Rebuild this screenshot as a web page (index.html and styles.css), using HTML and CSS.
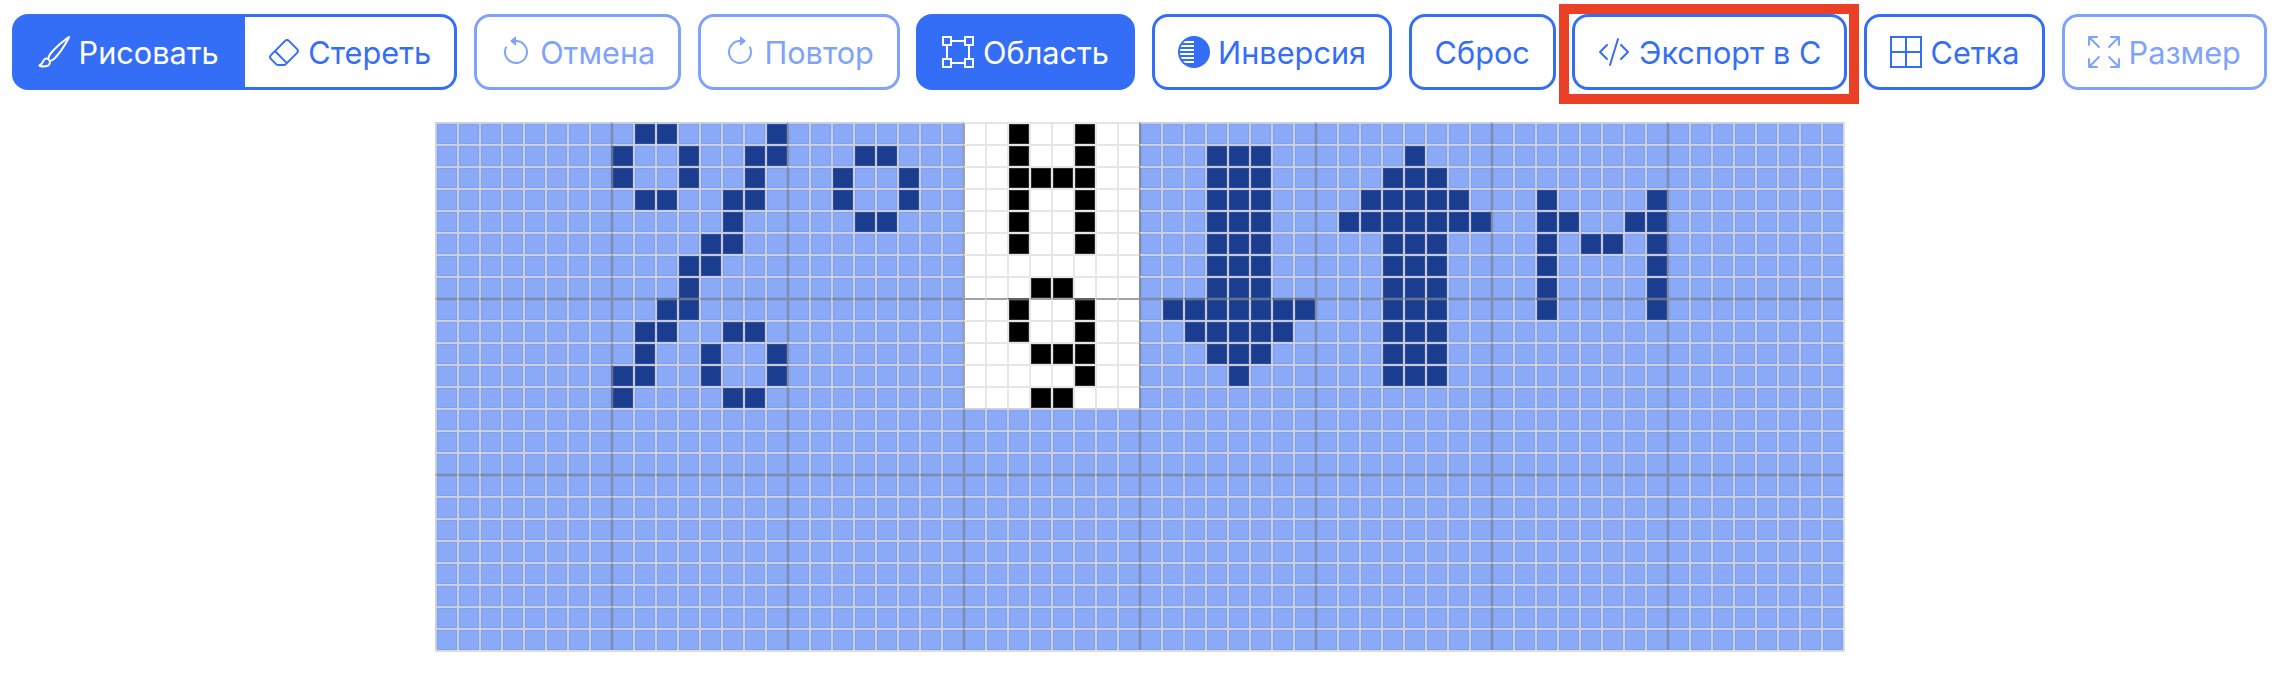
FILE: index.html
```html
<!DOCTYPE html>
<html lang="en">
<head>
    <meta charset="UTF-8">
    <meta name="viewport" content="width=device-width, initial-scale=1.0">
    <title>Редактор пикселей</title>
    <link rel="stylesheet" href="styles.css">
</head>
<body>

<div class="toolbar">
    <div class="btn-group">
        <button class="btn btn-active">
            <svg class="icon" viewBox="0 0 16 16"><path d="M15.825.12a.5.5 0 0 1 .132.584c-1.53 3.43-4.743 8.17-7.095 10.64a6.1 6.1 0 0 1-2.373 1.534c-.018.227-.06.538-.16.868-.201.659-.667 1.479-1.708 1.74a8.1 8.1 0 0 1-3.078.132 4 4 0 0 1-.562-.135 1.4 1.4 0 0 1-.466-.247.7.7 0 0 1-.204-.288.62.62 0 0 1 .004-.443c.095-.245.316-.38.461-.452.394-.197.625-.453.867-.826.095-.144.184-.297.287-.472l.117-.198c.151-.255.326-.54.546-.848.528-.739 1.201-.925 1.746-.896q.19.012.348.048c.062-.172.142-.38.238-.608.261-.619.658-1.419 1.187-2.069 2.176-2.67 6.18-6.206 9.117-8.104a.5.5 0 0 1 .596.04M4.705 11.912a1.2 1.2 0 0 0-.419-.1c-.246-.013-.573.05-.879.479-.197.275-.355.532-.5.777l-.105.177c-.106.181-.213.362-.32.528a3.4 3.4 0 0 1-.76.861c.69.112 1.736.111 2.657-.12.559-.139.843-.569.993-1.06a3 3 0 0 0 .126-.75zm1.44.026c.12-.04.277-.1.458-.183a5.1 5.1 0 0 0 1.535-1.1c1.9-1.996 4.412-5.57 6.052-8.631-2.59 1.927-5.566 4.66-7.302 6.792-.442.543-.795 1.243-1.042 1.826-.121.288-.214.54-.275.72v.001l.575.575z"/></svg>
            Рисовать
        </button>
        <button class="btn">
            <svg class="icon" viewBox="0 0 16 16"><path d="M8.086 2.207a2 2 0 0 1 2.828 0l3.879 3.879a2 2 0 0 1 0 2.828l-5.5 5.5A2 2 0 0 1 7.879 15H5.12a2 2 0 0 1-1.414-.586l-2.5-2.5a2 2 0 0 1 0-2.828zm2.121.707a1 1 0 0 0-1.414 0L4.16 7.547l5.293 5.293 4.633-4.633a1 1 0 0 0 0-1.414zM8.746 13.547 3.453 8.254 1.914 9.793a1 1 0 0 0 0 1.414l2.5 2.5a1 1 0 0 0 .707.293H7.88a1 1 0 0 0 .707-.293z"/></svg>
            Стереть
        </button>
    </div>

    <button class="btn btn-disabled">
        <svg class="icon" viewBox="0 0 16 16"><path d="M8 3a5 5 0 1 1-4.546 2.914.5.5 0 0 0-.908-.417A6 6 0 1 0 8 2z"/><path d="M8 4.466V.534a.25.25 0 0 0-.41-.192L5.23 2.308a.25.25 0 0 0 0 .384l2.36 1.966A.25.25 0 0 0 8 4.466"/></svg>
        Отмена
    </button>
    <button class="btn btn-disabled">
        <svg class="icon" viewBox="0 0 16 16"><path d="M8 3a5 5 0 1 0 4.546 2.914.5.5 0 0 1 .908-.417A6 6 0 1 1 8 2z"/><path d="M8 4.466V.534a.25.25 0 0 1 .41-.192l2.36 1.966c.12.1.12.284 0 .384L8.41 4.658A.25.25 0 0 1 8 4.466"/></svg>
        Повтор
    </button>
    <button class="btn btn-active">
        <svg class="icon" viewBox="0 0 16 16"><path d="M5 2V0H0v5h2v6H0v5h5v-2h6v2h5v-5h-2V5h2V0h-5v2zm6 1v2h2v6h-2v2H5v-2H3V5h2V3zm1-2h3v3h-3zm3 11v3h-3v-3zM4 15H1v-3h3zM1 4V1h3v3z"/></svg>
        Область
    </button>
    <button class="btn">
        <svg class="icon" viewBox="0 0 32 32">
            <clipPath id="stripeClip"><circle cx="16" cy="16" r="14"/></clipPath>
            <circle cx="16" cy="16" r="16"/>
            <g class="stripes" clip-path="url(#stripeClip)">
                <rect x="0" y="5" width="16" height="2"/>
                <rect x="0" y="9" width="16" height="2"/>
                <rect x="0" y="13" width="16" height="2"/>
                <rect x="0" y="17" width="16" height="2"/>
                <rect x="0" y="21" width="16" height="2"/>
                <rect x="0" y="25" width="16" height="2"/>
            </g>
        </svg>
        Инверсия
    </button>
    <button class="btn">Сброс</button>
    <button class="btn btn-marked">
        <svg class="icon" viewBox="0 0 16 16"><path d="M10.478 1.647a.5.5 0 1 0-.956-.294l-4 13a.5.5 0 0 0 .956.294zM4.854 4.146a.5.5 0 0 1 0 .708L1.707 8l3.147 3.146a.5.5 0 0 1-.708.708l-3.5-3.5a.5.5 0 0 1 0-.708l3.5-3.5a.5.5 0 0 1 .708 0m6.292 0a.5.5 0 0 0 0 .708L14.293 8l-3.147 3.146a.5.5 0 0 0 .708.708l3.5-3.5a.5.5 0 0 0 0-.708l-3.5-3.5a.5.5 0 0 0-.708 0"/></svg>
        Экспорт в С
    </button>
    <button class="btn">
        <svg class="icon" viewBox="0 0 16 16"><path d="M0 0h16v16H0zm1 1v6.5h6.5V1zm7.5 0v6.5H15V1zM15 8.5H8.5V15H15zM7.5 15V8.5H1V15z"/></svg>
        Сетка
    </button>
    <button class="btn btn-disabled">
        <svg class="icon" viewBox="0 0 16 16"><path d="M5.828 10.172a.5.5 0 0 0-.707 0l-4.096 4.096V11.5a.5.5 0 0 0-1 0v3.975a.5.5 0 0 0 .5.5H4.5a.5.5 0 0 0 0-1H1.732l4.096-4.096a.5.5 0 0 0 0-.707m4.344 0a.5.5 0 0 1 .707 0l4.096 4.096V11.5a.5.5 0 1 1 1 0v3.975a.5.5 0 0 1-.5.5H11.5a.5.5 0 0 1 0-1h2.768l-4.096-4.096a.5.5 0 0 1 0-.707m0-4.344a.5.5 0 0 0 .707 0l4.096-4.096V4.5a.5.5 0 1 0 1 0V.525a.5.5 0 0 0-.5-.5H11.5a.5.5 0 0 0 0 1h2.768l-4.096 4.096a.5.5 0 0 0 0 .707m-4.344 0a.5.5 0 0 1-.707 0L1.025 1.732V4.5a.5.5 0 0 1-1 0V.525a.5.5 0 0 1 .5-.5H4.5a.5.5 0 0 1 0 1H1.732l4.096 4.096a.5.5 0 0 1 0 .707"/></svg>
        Размер
    </button>
</div>

<div class="board-wrap">
    <div class="board" id="board"></div>
</div>

<script src="script.js"></script>
</body>
</html>
```

FILE: styles.css
```css
body {
    margin: 0;
    background-color: #fff;
    font-family: Inter, "Liberation Sans", sans-serif;
}

.toolbar {
    display: flex;
    gap: 16.5px;
    padding: 14px 12px 32px;
}

.btn-group {
    display: flex;
}

.btn {
    display: flex;
    align-items: center;
    gap: 8.6px;
    height: 76px;
    padding: 0 23px;
    box-sizing: border-box;
    background-color: #fff;
    color: #356ef6;
    border: 3px solid #356ef6;
    border-radius: 16px;
    font-family: inherit;
    font-size: 30.7px;
    font-weight: 420;
    white-space: nowrap;
}

.btn-group .btn:first-child {
    border-top-right-radius: 0;
    border-bottom-right-radius: 0;
}

.btn-group .btn:last-child {
    border-left: none;
    border-top-left-radius: 0;
    border-bottom-left-radius: 0;
}

.btn-active {
    background-color: #356ef6;
    color: #fff;
}

.btn-disabled {
    color: #7ea3fa;
    border-color: #7ea3fa;
}

/* red callout drawn around the export button */
.btn-marked {
    position: relative;
}

.btn-marked::after {
    content: "";
    position: absolute;
    top: -13px;
    right: -15px;
    bottom: -17px;
    left: -16px;
    border: 10px solid #ea4025;
}

.icon {
    width: 32px;
    height: 32px;
    flex-shrink: 0;
    fill: currentColor;
}

.stripes {
    fill: #fff;
}

.board-wrap {
    display: flex;
    justify-content: center;
    padding-right: 6px;
}

.board {
    display: grid;
    grid-template-columns: repeat(64, 22px);
    grid-auto-rows: 22px;
    border-right: 2px solid #ddd;
    border-bottom: 2px solid #ddd;
}

.cell {
    box-sizing: border-box;
    background-color: #8aaaf8;
    border-left: 2px solid rgba(208, 210, 218, 0.95);
    border-top: 2px solid rgba(208, 210, 218, 0.95);
    box-shadow: inset 0 0 0 1px rgba(50, 90, 225, 0.12);
}

.cell.on {
    background-color: #1a3d8f;
    box-shadow: inset 0 0 0 1px rgba(80, 110, 190, 0.35);
}

.cell.sel {
    background-color: #fff;
    border-left-color: #e6e6e6;
    border-top-color: #e6e6e6;
    box-shadow: none;
}

.cell.sel.on {
    background-color: #000;
    box-shadow: inset 0 0 0 1px rgba(70, 70, 70, 0.6);
}

/* heavier guide every 8 cells */
.cell.major-col {
    border-left-color: rgba(130, 130, 130, 0.75);
}

.cell.major-row {
    border-top-color: rgba(130, 130, 130, 0.75);
}
```

FILE: script.js
```js
// Display size
const COLS = 64;
const ROWS = 24;

// Selected area, drawn inverted
const selection = { x1: 24, x2: 31, y1: 0, y2: 12 };

// Lit pixels: column numbers per row
const pixels = [
    [9, 10, 15, 26, 29],
    [8, 11, 14, 15, 19, 20, 26, 29, 35, 36, 37, 44],
    [8, 11, 14, 18, 21, 26, 27, 28, 29, 35, 36, 37, 43, 44, 45],
    [9, 10, 13, 14, 18, 21, 26, 29, 35, 36, 37, 42, 43, 44, 45, 46, 50, 55],
    [13, 19, 20, 26, 29, 35, 36, 37, 41, 42, 43, 44, 45, 46, 47, 50, 51, 54, 55],
    [12, 13, 26, 29, 35, 36, 37, 43, 44, 45, 50, 52, 53, 55],
    [11, 12, 35, 36, 37, 43, 44, 45, 50, 55],
    [11, 27, 28, 35, 36, 37, 43, 44, 45, 50, 55],
    [10, 11, 26, 29, 33, 34, 35, 36, 37, 38, 39, 43, 44, 45, 50, 55],
    [9, 10, 13, 14, 26, 29, 34, 35, 36, 37, 38, 43, 44, 45],
    [9, 12, 15, 27, 28, 29, 35, 36, 37, 43, 44, 45],
    [8, 9, 12, 15, 29, 36, 43, 44, 45],
    [8, 13, 14, 27, 28]
];

function renderBoard() {
    const board = document.getElementById("board");
    for (let y = 0; y < ROWS; y++) {
        for (let x = 0; x < COLS; x++) {
            const cell = document.createElement("div");
            cell.className = "cell";
            if (pixels[y] && pixels[y].includes(x)) cell.classList.add("on");
            if (x >= selection.x1 && x <= selection.x2 && y >= selection.y1 && y <= selection.y2) {
                cell.classList.add("sel");
            }
            if (x > 0 && x % 8 === 0) cell.classList.add("major-col");
            if (y > 0 && y % 8 === 0) cell.classList.add("major-row");
            board.appendChild(cell);
        }
    }
}

renderBoard();
```
